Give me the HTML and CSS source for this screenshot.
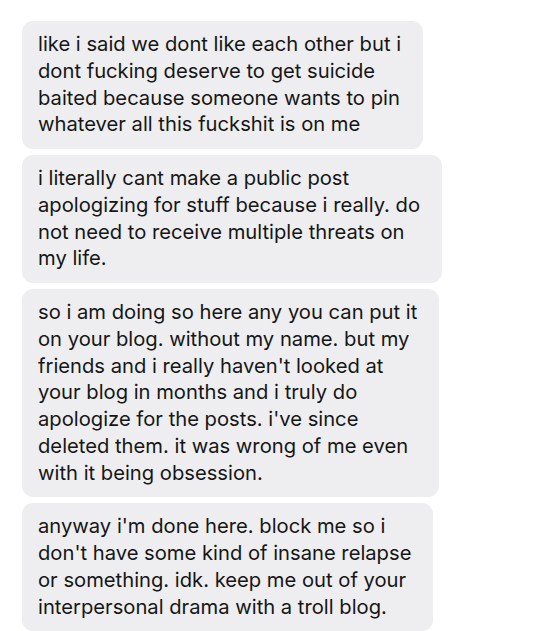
FILE: index.html
```html
<!DOCTYPE html>
<html lang="en">

<head>
    <meta charset="UTF-8">
    <meta name="viewport" content="width=device-width, initial-scale=1.0">
    <title>Messages</title>
    <link rel="stylesheet" href="styles.css">
</head>

<body>

    <div id="chat">
        <div class="bubble">like i said we dont like each other but i<br>dont fucking deserve to get suicide<br>baited because someone wants to pin<br>whatever all this fuckshit is on me</div>

        <div class="bubble">i literally cant make a public post<br>apologizing for stuff because i really. do<br>not need to receive multiple threats on<br>my life.</div>

        <div class="bubble">so i am doing so here any you can put it<br>on your blog. without my name. but my<br>friends and i really haven't looked at<br>your blog in months and i truly do<br>apologize for the posts. i've since<br>deleted them. it was wrong of me even<br>with it being obsession.</div>

        <div class="bubble">anyway i'm done here. block me so i<br>don't have some kind of insane relapse<br>or something. idk. keep me out of your<br>interpersonal drama with a troll blog.</div>
    </div>

</body>

</html>
```

FILE: styles.css
```css
body {
    margin: 0;
    background-color: #fff;
    font-family: Inter, 'Liberation Sans', sans-serif;
}

#chat {
    display: flex;
    flex-direction: column;
    align-items: flex-start;
    gap: 6px;
    padding: 21px 0 0 22px;
}

.bubble {
    background-color: #eeeef0;
    color: #161616;
    font-size: 20.2px;
    line-height: 26.75px;
    padding: 10px 22px 11px 16px;
    border-radius: 11px;
    white-space: nowrap;
}
```
